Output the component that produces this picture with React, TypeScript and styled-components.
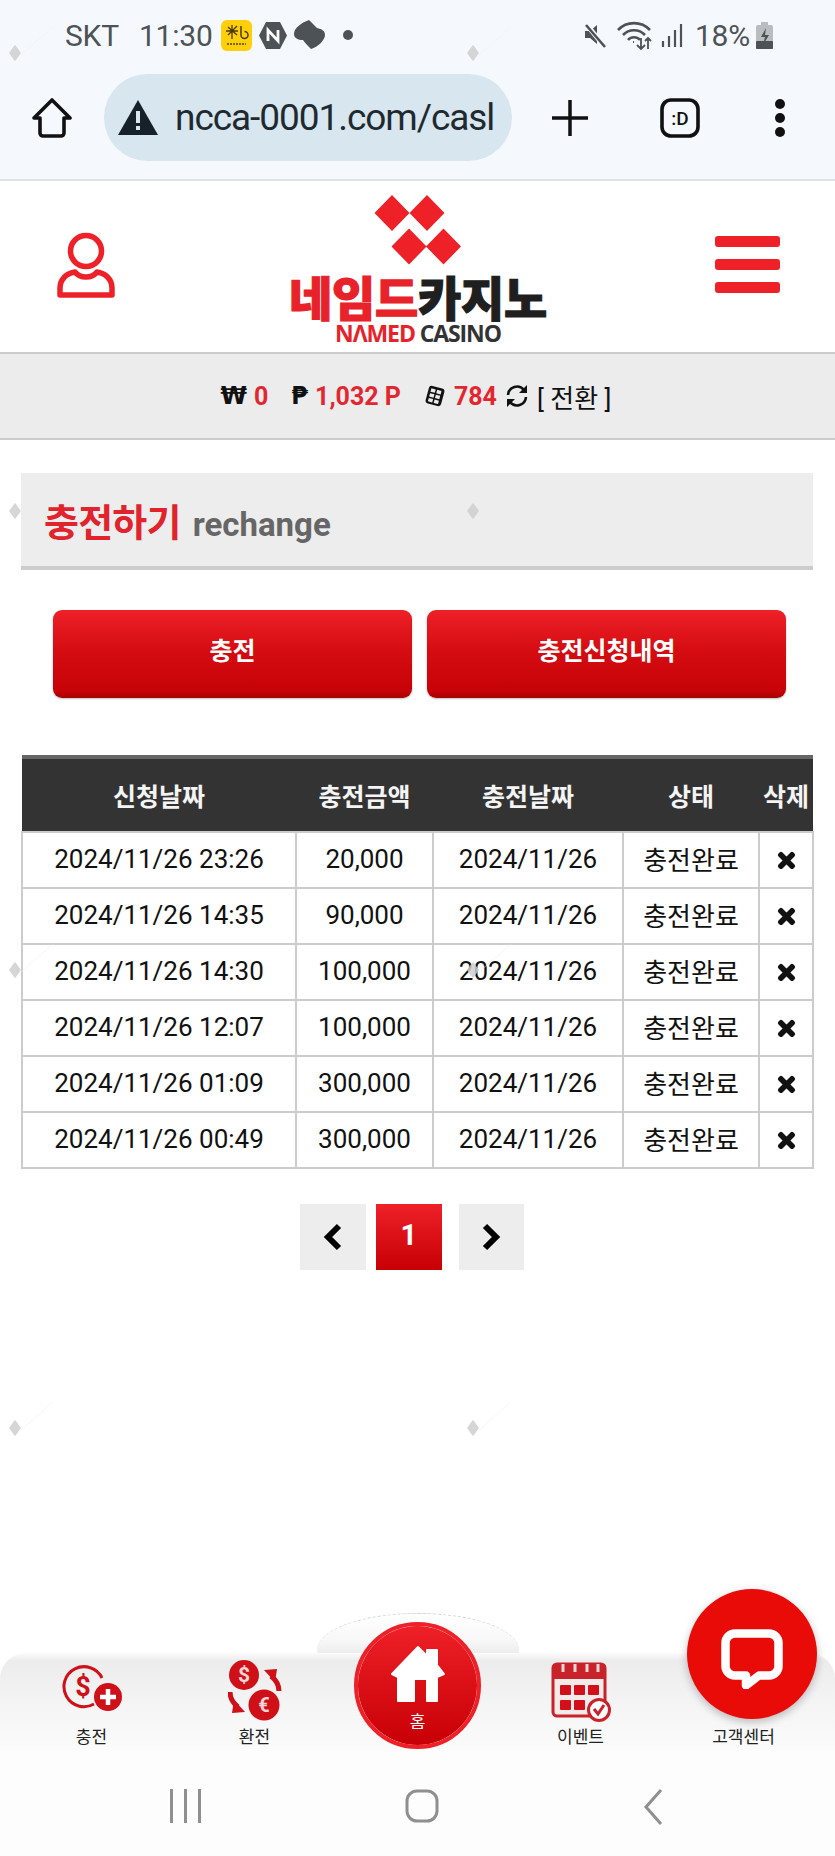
import React, { FC } from "react";
import styled, { createGlobalStyle } from "styled-components";
import { FaTimes } from "react-icons/fa";

const GlobalStyle = createGlobalStyle`
  html, body {
    margin: 0;
    padding: 0;
    background: #fff;
  }
  * {
    box-sizing: border-box;
  }
  body {
    font-family: Roboto, "Noto Sans CJK KR", sans-serif;
  }
`;

const Page = styled.div`
  position: relative;
  width: 835px;
  height: 1856px;
  display: flex;
  flex-direction: column;
  overflow: hidden;
  background: #fff;
`;

/* phone status bar + browser toolbar */
const BrowserChrome = styled.div`
  height: 181px;
  flex: none;
  background: #f5f9fe;
  border-bottom: 2px solid #dde3e6;
`;

const StatusBar = styled.div`
  height: 74px;
  padding: 17px 62px 0 65px;
  display: flex;
  justify-content: space-between;
  color: #4d5257;
  font-size: 30px;
`;

const StatusGroup = styled.div`
  display: flex;
  align-items: center;
  height: 36px;
`;

const StatusText = styled.span<{ $mr?: number }>`
  margin-right: ${(p) => p.$mr ?? 0}px;
  letter-spacing: -0.2px;
`;

const Toolbar = styled.div`
  height: 87px;
  display: flex;
  align-items: center;
  padding-left: 32px;
`;

const UrlBar = styled.div`
  width: 408px;
  height: 87px;
  margin-left: 32px;
  margin-right: 40px;
  padding: 0 14px 0 14px;
  border-radius: 44px;
  background: #d8e6ef;
  display: flex;
  align-items: center;
  overflow: hidden;
`;

const UrlText = styled.span`
  margin-left: 17px;
  font-size: 37px;
  color: #1f2a30;
  white-space: nowrap;
  overflow: hidden;
  flex: 1;
  letter-spacing: -1.05px;
`;

const ToolIcon = styled.svg<{ $mr?: number }>`
  flex: none;
  margin-right: ${(p) => p.$mr ?? 0}px;
`;

/* site header */
const Header = styled.header`
  height: 171px;
  flex: none;
  padding: 0 55px 4px 57px;
  display: flex;
  align-items: center;
  justify-content: space-between;
  background: #fff;
`;

const Logo = styled.div`
  width: 258px;
  margin: 10px 0 0 6px;
  display: flex;
  flex-direction: column;
  align-items: center;
`;

const LogoKo = styled.div`
  margin-top: 9px;
  height: 44px;
  line-height: 44px;
  font-family: "Noto Sans CJK KR", sans-serif;
  font-weight: 900;
  font-size: 47px;
  letter-spacing: -0.2px;
  white-space: nowrap;
  -webkit-text-stroke: 1.2px currentColor;
  color: #1f1f1f;
`;

const LogoEn = styled.div`
  margin-top: 3px;
  height: 24px;
  line-height: 24px;
  font-family: "Open Sans", sans-serif;
  font-weight: 700;
  font-size: 23px;
  letter-spacing: -1.1px;
  white-space: nowrap;
  color: #333;
`;

const Red = styled.span`
  color: #e8222b;
`;

const Hamburger = styled.div`
  width: 65px;
  display: flex;
  flex-direction: column;
  gap: 12px;
`;

const HamburgerBar = styled.span`
  height: 11px;
  border-radius: 3px;
  background: #ee2028;
`;

/* money strip */
const BalanceBar = styled.div`
  height: 88px;
  flex: none;
  display: flex;
  align-items: center;
  justify-content: center;
  background: #ececec;
  border-top: 2px solid #ccc;
  border-bottom: 2px solid #ccc;
  font-size: 25px;
  font-weight: 700;
  padding-right: 3px;
`;

const Currency = styled.span`
  font-family: "DejaVu Sans", sans-serif;
  font-weight: 700;
  font-size: 24px;
  color: #111;
  margin-right: 7px;
`;

const Amount = styled.span<{ $mr: number }>`
  color: #e22730;
  margin-right: ${(p) => p.$mr}px;
  white-space: nowrap;
`;

const DiceIcon = styled.svg`
  margin-right: 8px;
`;

const Convert = styled.span`
  margin-left: 8px;
  font-weight: 400;
  font-size: 26px;
  color: #111;
  white-space: nowrap;
`;

/* content */
const Main = styled.main`
  flex: 1;
  padding: 33px 22px 0 21px;
`;

const TitleBox = styled.div`
  height: 97px;
  padding: 19px 0 0 23px;
  background: #ededed;
  border-bottom: 4px solid #ccc;
  display: flex;
  align-items: baseline;
  gap: 12px;
`;

const TitleKo = styled.span`
  font-size: 38px;
  font-weight: 700;
  color: #e0232c;
  letter-spacing: -0.8px;
`;

const TitleEn = styled.span`
  font-size: 33px;
  font-weight: 700;
  color: #666;
`;

const ButtonRow = styled.div`
  margin-top: 40px;
  padding: 0 27px 0 32px;
  display: grid;
  grid-template-columns: 359px 359px;
  column-gap: 15px;
`;

const RedButton = styled.button`
  height: 88px;
  padding: 0 0 10px;
  border: 0;
  border-radius: 9px;
  background: linear-gradient(#ee2028, #d50d12 45%, #c70207 92%, #a40004);
  box-shadow: 0 1px 2px rgba(0, 0, 0, 0.25);
  color: #fff;
  font-family: inherit;
  font-size: 25px;
  font-weight: 700;
`;

const Table = styled.table`
  margin-top: 57px;
  width: 791px;
  table-layout: fixed;
  border-collapse: collapse;
`;

const Col = styled.col<{ $w: number }>`
  width: ${(p) => p.$w}px;
`;

const Th = styled.th`
  height: 75px;
  padding: 0;
  background: #333;
  border-top: 4px solid #666;
  color: #f4f4f4;
  font-size: 25px;
  font-weight: 700;
  white-space: nowrap;
`;

const Td = styled.td`
  height: 56px;
  padding: 0 0 3px;
  border: 2px solid #ccc;
  text-align: center;
  font-size: 26px;
  color: #111;
  white-space: nowrap;
`;

const DeleteIcon = styled(FaTimes)`
  display: block;
  margin: 4px auto 0;
  stroke: #111;
  stroke-width: 30px;
`;

const Pager = styled.div`
  margin-top: 35px;
  padding-left: 279px;
  display: flex;
`;

const PageBox = styled.div<{ $active?: boolean; $mr?: number }>`
  width: 65.5px;
  height: 66px;
  margin-right: ${(p) => p.$mr ?? 0}px;
  display: flex;
  align-items: center;
  justify-content: center;
  padding-bottom: ${(p) => (p.$active ? 4 : 0)}px;
  background: ${(p) =>
    p.$active ? "linear-gradient(#ee2028, #c70005)" : "#ededed"};
  color: #fff;
  font-size: 29px;
  font-weight: 700;
`;

/* bottom menu */
const BottomMenu = styled.nav`
  position: relative;
  height: 137px;
  flex: none;
  padding-top: 40px;
`;

const Hump = styled.div`
  position: absolute;
  left: 317px;
  top: 0;
  width: 202px;
  height: 74px;
  border-radius: 50%;
  border-top: 1px dashed #d4d4d4;
  background: linear-gradient(#fff, #f8f8f8 35%, #e9e9e9 60%);
`;

const MenuBar = styled.div`
  position: relative;
  height: 97px;
  padding: 0 10px;
  border-radius: 26px 26px 0 0;
  background: linear-gradient(#fbfbfb, #ececec 8%, #f4f4f4 50%, #fbfbfb);
  display: grid;
  grid-template-columns: repeat(5, 163px);
`;

const MenuItem = styled.div`
  display: flex;
  flex-direction: column;
  align-items: center;
  justify-content: flex-end;
  padding-bottom: 2px;
`;

const MenuIcon = styled.svg<{ $mb: number }>`
  display: block;
  margin-bottom: ${(p) => p.$mb}px;
`;

const MenuLabel = styled.span`
  height: 22px;
  line-height: 22px;
  font-size: 17px;
  color: #222;
  white-space: nowrap;
`;

const HomeCircle = styled.div`
  position: absolute;
  left: 354px;
  top: 9px;
  width: 127px;
  height: 127px;
  padding-top: 19px;
  border-radius: 50%;
  background: linear-gradient(#ee2028, #c70005) padding-box;
  border: 4px solid #ee2028;
  display: flex;
  flex-direction: column;
  align-items: center;
  gap: 5px;
  color: #fff;
  font-size: 17px;
`;

const ChatCircle = styled.div`
  position: absolute;
  left: 687px;
  top: -24px;
  width: 130px;
  height: 130px;
  padding-top: 10px;
  border-radius: 50%;
  background: #e80b08;
  box-shadow: 0 3px 8px rgba(0, 0, 0, 0.25);
  display: flex;
  align-items: center;
  justify-content: center;
`;

/* android navigation */
const AndroidNav = styled.div`
  height: 106px;
  flex: none;
  padding: 39px 172px 0 170px;
  background: #fdfdfd;
  display: flex;
  justify-content: space-between;
  align-items: flex-start;
`;

const Watermark = styled.svg<{ $x: number; $y: number }>`
  position: absolute;
  left: ${(p) => p.$x}px;
  top: ${(p) => p.$y}px;
  pointer-events: none;
`;

const rows = [
  ["2024/11/26 23:26", "20,000"],
  ["2024/11/26 14:35", "90,000"],
  ["2024/11/26 14:30", "100,000"],
  ["2024/11/26 12:07", "100,000"],
  ["2024/11/26 01:09", "300,000"],
  ["2024/11/26 00:49", "300,000"],
];

const marks = [53, 511, 970, 1428].flatMap((y) => [
  { x: 5, y: y - 28 },
  { x: 463, y: y - 28 },
]);

const ICON_RED = "#cf1018";

const CoinPlusIcon: FC = () => (
  <MenuIcon $mb={15} width="62" height="46" viewBox="0 0 62 46">
    <path d="M33 39A20 20 0 1 1 41 13" fill="none" stroke={ICON_RED} strokeWidth="3" />
    <text x="22" y="31" textAnchor="middle" fontSize="27" fontWeight="700" fill={ICON_RED} fontFamily="Roboto">$</text>
    <circle cx="47" cy="32" r="14" fill={ICON_RED} />
    <path d="M47 24v16M39 32h16" stroke="#fff" strokeWidth="4.500" />
  </MenuIcon>
);

const ExchangeIcon: FC = () => (
  <MenuIcon $mb={5} width="54" height="62" viewBox="0 0 54 62">
    <circle cx="16" cy="16" r="15" fill={ICON_RED} />
    <text x="16" y="23" textAnchor="middle" fontSize="21" fontWeight="700" fill="#f3d5d5" fontFamily="Roboto">$</text>
    <circle cx="36" cy="46" r="15.500" fill={ICON_RED} />
    <text x="36" y="53" textAnchor="middle" fontSize="20" fontWeight="700" fill="#f3d5d5" fontFamily="Roboto">€</text>
    <path d="M51 32c0-6-3-11-8-15" fill="none" stroke={ICON_RED} strokeWidth="5" />
    <path d="M36 11l13-1-2 13z" fill={ICON_RED} />
    <path d="M2 33c0 6 3 11 8 15" fill="none" stroke={ICON_RED} strokeWidth="5" />
    <path d="M17 53l-13 1 2-13z" fill={ICON_RED} />
  </MenuIcon>
);

const CalendarIcon: FC = () => (
  <MenuIcon $mb={4} width="60" height="60" viewBox="0 0 60 60">
    <rect x="2" y="2" width="52" height="52" rx="4" fill="#f3eaea" stroke="#c8232b" strokeWidth="3" />
    <path d="M2 5a3 3 0 0 1 3-3h46a3 3 0 0 1 3 3v12H2z" fill="#c8232b" />
    <path d="M12 2v8M24 2v8M36 2v8M47 2v8" stroke="#f3d5d5" strokeWidth="3" />
    {[9, 23, 37].map((x) => (
      <rect key={x} x={x} y="23" width="11" height="10" rx="1" fill="#d3101a" />
    ))}
    {[9, 23].map((x) => (
      <rect key={x} x={x} y="38" width="11" height="10" rx="1" fill="#d3101a" />
    ))}
    <circle cx="48" cy="48" r="10.500" fill="#fff" stroke="#c8232b" strokeWidth="3" />
    <path d="M43 47l4 5 6-9" fill="none" stroke="#c8232b" strokeWidth="3" />
  </MenuIcon>
);

const App: FC = () => (
  <Page>
    <GlobalStyle />
    <BrowserChrome>
      <StatusBar>
        <StatusGroup>
          <StatusText $mr={20}>SKT</StatusText>
          <StatusText $mr={8}>11:30</StatusText>
          <ToolIcon $mr={6} width="31" height="31" viewBox="0 0 31 31">
            <rect width="31" height="31" rx="6" fill="#ffd00a" />
            <path d="M7 7l9 8M16 6l-9 9M11 5v14M5 11h12" stroke="#4a3800" strokeWidth="1.300" fill="none" />
            <path d="M20 6v9a3.500 3.500 0 1 0 3.500-3.500" stroke="#4a3800" strokeWidth="1.500" fill="none" />
            <path d="M6 24h19" stroke="#7a6400" strokeWidth="1.800" strokeDasharray="2 1" />
          </ToolIcon>
          <ToolIcon $mr={5} width="30" height="29" viewBox="0 0 30 29">
            <path d="M8 1h14l7 13.500-7 13.500H8L1 14.500z" fill="#4d5257" />
            <path d="M10 20V9l10 11V9" stroke="#fff" strokeWidth="2.800" fill="none" />
          </ToolIcon>
          <ToolIcon $mr={17} width="33" height="30" viewBox="0 0 33 30">
            <path d="M16 0C8 3 1 8 1 14c0 4 4 6 9 6 2 3 5 6 8 9 7-2 14-9 14-14 0-4-3-6-8-7z" fill="#4d5257" />
          </ToolIcon>
          <ToolIcon width="10" height="10" viewBox="0 0 10 10">
            <circle cx="5" cy="5" r="5" fill="#4d5257" />
          </ToolIcon>
        </StatusGroup>
        <StatusGroup>
          <ToolIcon $mr={10} width="24" height="26" viewBox="0 0 24 26">
            <path d="M2 9h5l7-6v19l-7-6H2z" fill="#4d5257" />
            <path d="M3 2l19 23" stroke="#f5f9fe" strokeWidth="5" />
            <path d="M3 3l19 22" stroke="#4d5257" strokeWidth="2.600" />
          </ToolIcon>
          <ToolIcon $mr={8} width="36" height="30" viewBox="0 0 36 30">
            <path d="M1 10a22 22 0 0 1 32 0M6 15a15 15 0 0 1 22 0M11 20a8 8 0 0 1 12 0" fill="none" stroke="#4d5257" strokeWidth="2.600" />
            <path d="M17 22h-1M24 18v11M20 25l4 4 4-4M31 29V18M28 21l3-3 3 3" fill="none" stroke="#4d5257" strokeWidth="1.800" />
          </ToolIcon>
          <ToolIcon $mr={12} width="22" height="24" viewBox="0 0 22 24">
            <path d="M2 18v6M8 13v11M14 7v17M20 1v23" stroke="#4d5257" strokeWidth="2.200" />
          </ToolIcon>
          <StatusText $mr={6}>18%</StatusText>
          <ToolIcon width="17" height="27" viewBox="0 0 17 27">
            <path d="M5 0h7v3H5z" fill="#b9bdc0" />
            <rect y="3" width="17" height="24" rx="2" fill="#b9bdc0" />
            <rect y="19" width="17" height="8" rx="1" fill="#4d5257" />
            <path d="M10 6l-5 9h4l-2 8 6-10H9z" fill="#4d5257" />
          </ToolIcon>
        </StatusGroup>
      </StatusBar>
      <Toolbar>
        <ToolIcon width="40" height="40" viewBox="0 0 40 40">
          <path d="M2 20L20 2l18 18h-6v15a3 3 0 0 1-3 3H11a3 3 0 0 1-3-3V20z" fill="none" stroke="#111" strokeWidth="3.600" strokeLinejoin="round" />
        </ToolIcon>
        <UrlBar>
          <ToolIcon width="40" height="35" viewBox="0 0 40 35">
            <path d="M20 0l20 35H0z" fill="#16212a" />
            <path d="M18 11h4v12h-4zM18 26h4v4h-4z" fill="#d8e6ef" />
          </ToolIcon>
          <UrlText>ncca-0001.com/casl</UrlText>
        </UrlBar>
        <ToolIcon $mr={72} width="36" height="36" viewBox="0 0 36 36">
          <path d="M18 0v36M0 18h36" stroke="#111" strokeWidth="3.500" />
        </ToolIcon>
        <ToolIcon $mr={74} width="40" height="40" viewBox="0 0 40 40">
          <rect x="2" y="2" width="36" height="36" rx="9" fill="none" stroke="#111" strokeWidth="3.600" />
          <text x="20" y="27" textAnchor="middle" fontSize="19" fontWeight="500" fill="#111" fontFamily="Roboto">:D</text>
        </ToolIcon>
        <ToolIcon width="12" height="38" viewBox="0 0 12 38">
          <circle cx="6" cy="5" r="5" fill="#111" />
          <circle cx="6" cy="19" r="5" fill="#111" />
          <circle cx="6" cy="33" r="5" fill="#111" />
        </ToolIcon>
      </Toolbar>
    </BrowserChrome>

    <Header>
      <svg width="58" height="66" viewBox="0 0 58 66">
        <ellipse cx="29" cy="19" rx="15.500" ry="15.500" fill="none" stroke="#ee2028" strokeWidth="5.500" />
        <path d="M18 40c-8 1-15 7-15 16v7h52v-7c0-9-7-15-15-16-3 4-7 5-11 5s-8-1-11-5z" fill="none" stroke="#ee2028" strokeWidth="5.500" strokeLinejoin="round" />
      </svg>
      <Logo>
        <svg width="88" height="70" viewBox="0 0 88 70">
          <path d="M18 0l17.500 18L18 36 .5 18zM53 0l17.500 18L53 36 35.500 18zM35 33.500L52.500 51.500 35 69.500 17.500 51.500zM69.500 33.500L87 51.500 69.500 69.500 52 51.500z" fill="#ee2028" />
        </svg>
        <LogoKo>
          <Red>네임드</Red>카지노
        </LogoKo>
        <LogoEn>
          <Red>NΛMED</Red> CASINO
        </LogoEn>
      </Logo>
      <Hamburger>
        <HamburgerBar />
        <HamburgerBar />
        <HamburgerBar />
      </Hamburger>
    </Header>

    <BalanceBar>
      <Currency>₩</Currency>
      <Amount $mr={23}>0</Amount>
      <Currency>₱</Currency>
      <Amount $mr={23}>1,032 P</Amount>
      <DiceIcon width="22" height="24" viewBox="0 0 22 24">
        <g transform="rotate(15 11 12)">
          <rect x="3" y="3" width="16" height="18" rx="3" fill="#111" />
          {[5.5, 11.5].map((x) =>
            [5.5, 10.5, 15.5].map((y) => (
              <rect key={`${x}-${y}`} x={x} y={y} width="4.500" height="3.500" fill="#ececec" />
            ))
          )}
        </g>
      </DiceIcon>
      <Amount $mr={8}>784</Amount>
      <svg width="24" height="24" viewBox="0 0 24 24">
        <path d="M3 11a9 9 0 0 1 16-5M21 13a9 9 0 0 1-16 5" fill="none" stroke="#111" strokeWidth="2.600" />
        <path d="M22 1v8h-8zM2 23v-8h8z" fill="#111" />
      </svg>
      <Convert>[ 전환 ]</Convert>
    </BalanceBar>

    <Main>
      <TitleBox>
        <TitleKo>충전하기</TitleKo>
        <TitleEn>rechange</TitleEn>
      </TitleBox>
      <ButtonRow>
        <RedButton>충전</RedButton>
        <RedButton>충전신청내역</RedButton>
      </ButtonRow>
      <Table>
        <colgroup>
          <Col $w={274} />
          <Col $w={137} />
          <Col $w={190} />
          <Col $w={136} />
          <Col $w={54} />
        </colgroup>
        <thead>
          <tr>
            <Th>신청날짜</Th>
            <Th>충전금액</Th>
            <Th>충전날짜</Th>
            <Th>상태</Th>
            <Th>삭제</Th>
          </tr>
        </thead>
        <tbody>
          {rows.map(([requested, amount]) => (
            <tr key={requested}>
              <Td>{requested}</Td>
              <Td>{amount}</Td>
              <Td>2024/11/26</Td>
              <Td>충전완료</Td>
              <Td>
                <DeleteIcon size={23} color="#111" />
              </Td>
            </tr>
          ))}
        </tbody>
      </Table>
      <Pager>
        <PageBox $mr={10.5}>
          <svg width="20" height="28" viewBox="0 0 20 28">
            <path d="M16 3L5 14l11 11" fill="none" stroke="#000" strokeWidth="6" />
          </svg>
        </PageBox>
        <PageBox $active $mr={17}>
          1
        </PageBox>
        <PageBox>
          <svg width="20" height="28" viewBox="0 0 20 28">
            <path d="M4 3l11 11L4 25" fill="none" stroke="#000" strokeWidth="6" />
          </svg>
        </PageBox>
      </Pager>
    </Main>

    <BottomMenu>
      <Hump />
      <MenuBar>
        <MenuItem>
          <CoinPlusIcon />
          <MenuLabel>충전</MenuLabel>
        </MenuItem>
        <MenuItem>
          <ExchangeIcon />
          <MenuLabel>환전</MenuLabel>
        </MenuItem>
        <MenuItem />
        <MenuItem>
          <CalendarIcon />
          <MenuLabel>이벤트</MenuLabel>
        </MenuItem>
        <MenuItem>
          <MenuLabel>고객센터</MenuLabel>
        </MenuItem>
      </MenuBar>
      <HomeCircle>
        <svg width="56" height="58" viewBox="0 0 56 58">
          <path d="M28 2L37 11V5h10v15l7 9-7 3v24H37V34H24v22H8V32l-6-3z" fill="#fff" stroke="#fff" strokeWidth="2" strokeLinejoin="round" />
        </svg>
        <span>홈</span>
      </HomeCircle>
      <ChatCircle>
        <svg width="62" height="60" viewBox="0 0 62 60">
          <path d="M14 4.500h34a9.500 9.500 0 0 1 9.500 9.500v23a9.500 9.500 0 0 1-9.500 9.500H38l-13 10v-10H14A9.500 9.500 0 0 1 4.500 37V14A9.500 9.500 0 0 1 14 4.500z" fill="none" stroke="#fff" strokeWidth="8.500" strokeLinejoin="round" />
        </svg>
      </ChatCircle>
    </BottomMenu>

    <AndroidNav>
      <svg width="31" height="34" viewBox="0 0 31 34">
        <path d="M1.500 0v34M15.500 0v34M29.500 0v34" stroke="#8f8f8f" strokeWidth="3" />
      </svg>
      <svg width="34" height="34" viewBox="0 0 34 34">
        <rect x="2" y="2" width="30" height="30" rx="10" fill="none" stroke="#8f8f8f" strokeWidth="3" />
      </svg>
      <svg width="20" height="36" viewBox="0 0 20 36">
        <path d="M18 1L3 18l15 17" fill="none" stroke="#8f8f8f" strokeWidth="3" />
      </svg>
    </AndroidNav>

    {marks.map((m) => (
      <Watermark key={`${m.x}-${m.y}`} $x={m.x} $y={m.y} width="60" height="46" viewBox="0 0 60 46">
        <path d="M16 30L48 2" stroke="#f1f1f1" strokeWidth="1" opacity="0.5" />
        <path d="M10 21l5 7-5 7-5-7z" fill="#cfcfcf" stroke="#cfcfcf" strokeWidth="1.500" strokeLinejoin="round" opacity="0.85" />
      </Watermark>
    ))}
  </Page>
);

export default App;
